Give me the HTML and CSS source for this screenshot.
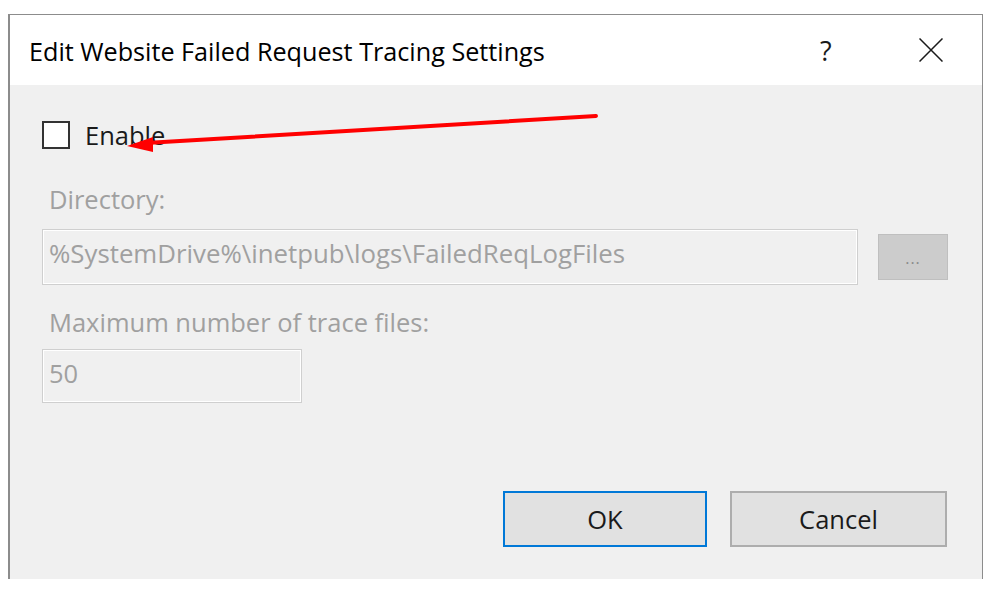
FILE: index.html
```html
<!DOCTYPE html>
<html>
<head>
<meta charset="utf-8">
<link rel="stylesheet" href="styles.css">
</head>
<body>
<div class="dialog">
  <div class="titlebar">
    <div class="title">Edit Website Failed Request Tracing Settings</div>
    <div class="help">?</div>
    <div class="close">
      <svg width="24" height="24" viewBox="0 0 24 24"><path d="M0.5 0.5 L23.5 23.5 M23.5 0.5 L0.5 23.5" stroke="#1a1a1a" stroke-width="1.5" fill="none"/></svg>
    </div>
  </div>
  <div class="content">
    <label class="check-row">
      <span class="checkbox"></span>
      <span class="check-label">Enable</span>
    </label>
    <div class="field-label dir-label">Directory:</div>
    <div class="dir-row">
      <div class="textbox dir-box">%SystemDrive%\inetpub\logs\FailedReqLogFiles</div>
      <div class="browse">...</div>
    </div>
    <div class="field-label max-label">Maximum number of trace files:</div>
    <div class="textbox max-box">50</div>
    <div class="buttons">
      <div class="btn ok">OK</div>
      <div class="btn cancel">Cancel</div>
    </div>
  </div>
</div>
<svg class="arrow" width="998" height="591" viewBox="0 0 998 591">
  <path d="M596 116 L146 143" stroke="#ff0000" stroke-width="4" stroke-linecap="round" fill="none"/>
  <polygon points="127,146 153,137 153,152" fill="#ff0000"/>
</svg>
</body>
</html>
```

FILE: styles.css
```css
html, body {
  margin: 0;
  padding: 0;
  background: #ffffff;
}
body {
  width: 998px;
  height: 591px;
  position: relative;
  overflow: hidden;
  font-family: "Open Sans", "Noto Sans", sans-serif;
}
.dialog {
  margin: 14px 0 0 8px;
  width: 972px;
  height: 564px;
  border: 1px solid #8c8c8c;
  border-left: 2px solid #8c8c8c;
  border-bottom: none;
  background: #f0f0f0;
  display: flex;
  flex-direction: column;
}
.titlebar {
  height: 70px;
  background: #ffffff;
  display: flex;
  align-items: center;
  padding-left: 19px;
}
.title {
  font-size: 25.2px;
  color: #000;
  flex: 1;
  padding-top: 2px;
}
.help {
  font-size: 27px;
  color: #1a1a1a;
  width: 14px;
  margin-right: 85px;
}
.close {
  width: 24px;
  height: 24px;
  margin-right: 39px;
}
.close svg { display: block; }
.content {
  flex: 1;
  padding: 36px 0 0 32px;
  display: flex;
  flex-direction: column;
}
.check-row {
  display: flex;
  align-items: center;
  height: 28px;
}
.checkbox {
  width: 24px;
  height: 24px;
  border: 2px solid #333333;
  background: #ffffff;
}
.check-label {
  margin-left: 15px;
  font-size: 25.5px;
  color: #1a1a1a;
}
.field-label {
  font-size: 25.5px;
  line-height: 30px;
  color: #a0a0a0;
  margin-left: 7px;
}
.dir-label {
  margin-top: 35px;
}
.dir-row {
  display: flex;
  align-items: center;
  margin-top: 15px;
}
.textbox {
  box-sizing: border-box;
  border: 1px solid #cfcfcf;
  box-shadow: inset 0 0 0 1px #ffffff;
  background: #f0f0f0;
  color: #a0a0a0;
  font-size: 25.5px;
  padding: 0 0 6px 6px;
  display: flex;
  align-items: center;
}
.dir-box {
  width: 816px;
  height: 56px;
  padding-bottom: 8px;
  font-size: 25.8px;
}
.browse {
  box-sizing: border-box;
  margin-left: 20px;
  width: 70px;
  height: 46px;
  background: #cccccc;
  border: 1px solid #bfbfbf;
  color: #8a8a8a;
  font-size: 16px;
  display: flex;
  align-items: flex-end;
  justify-content: center;
  padding-bottom: 10px;
  letter-spacing: 1px;
}
.max-label {
  margin-top: 22px;
}
.max-box {
  margin-top: 12px;
  width: 260px;
  height: 54px;
}
.buttons {
  display: flex;
  justify-content: flex-end;
  margin-top: 88px;
  padding-right: 35px;
  gap: 23px;
}
.btn {
  box-sizing: border-box;
  height: 56px;
  background: #e1e1e1;
  font-size: 25.5px;
  color: #1a1a1a;
  display: flex;
  align-items: center;
  justify-content: center;
}
.ok {
  width: 204px;
  border: 2px solid #0078d7;
}
.cancel {
  width: 217px;
  border: 2px solid #adadad;
}
.arrow {
  position: absolute;
  left: 0;
  top: 0;
  pointer-events: none;
}
```
